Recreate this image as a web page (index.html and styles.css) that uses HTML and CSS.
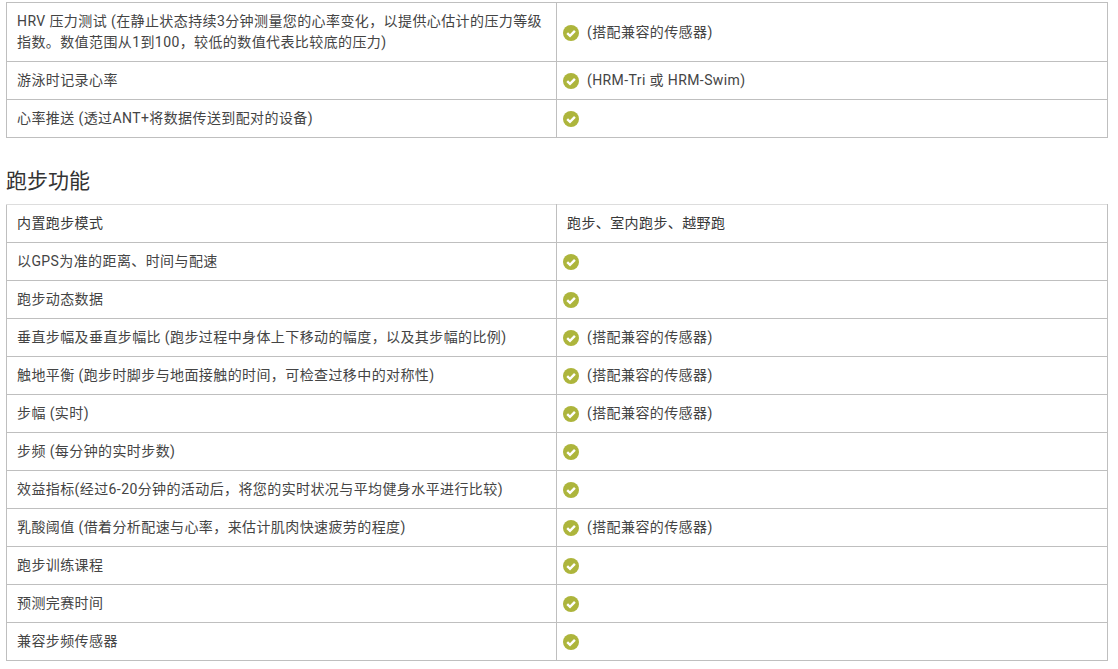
FILE: index.html
```html
<!DOCTYPE html>
<html lang="zh-CN">
<head>
<meta charset="utf-8">
<title>跑步功能</title>
<link rel="stylesheet" href="styles.css">
</head>
<body>
<svg class="defs" width="0" height="0" aria-hidden="true">
  <symbol id="ok" viewBox="0 0 16 16">
    <circle cx="8" cy="8" r="8" fill="#adb53c"/>
    <path d="M4.2 8.2 7 10.9 11.9 5.8" fill="none" stroke="#fff" stroke-width="2.4"/>
  </symbol>
</svg>
<table class="spec first">
  <colgroup><col class="name"><col></colgroup>
  <tr><td>HRV 压力测试 (在静止状态持续3分钟测量您的心率变化，以提供心估计的压力等级指数。数值范围从1到100，较低的数值代表比较底的压力)</td><td><svg class="ok"><use href="#ok"/></svg><span>(搭配兼容的传感器)</span></td></tr>
  <tr><td>游泳时记录心率</td><td><svg class="ok"><use href="#ok"/></svg><span>(HRM-Tri 或 HRM-Swim)</span></td></tr>
  <tr><td>心率推送 (透过ANT+将数据传送到配对的设备)</td><td><svg class="ok"><use href="#ok"/></svg></td></tr>
</table>
<h2 class="title">跑步功能</h2>
<table class="spec second">
  <colgroup><col class="name"><col></colgroup>
  <tr class="head"><td>内置跑步模式</td><td class="plain">跑步、室内跑步、越野跑</td></tr>
  <tr><td>以GPS为准的距离、时间与配速</td><td><svg class="ok"><use href="#ok"/></svg></td></tr>
  <tr><td>跑步动态数据</td><td><svg class="ok"><use href="#ok"/></svg></td></tr>
  <tr><td>垂直步幅及垂直步幅比 (跑步过程中身体上下移动的幅度，以及其步幅的比例)</td><td><svg class="ok"><use href="#ok"/></svg><span>(搭配兼容的传感器)</span></td></tr>
  <tr><td>触地平衡 (跑步时脚步与地面接触的时间，可检查过移中的对称性)</td><td><svg class="ok"><use href="#ok"/></svg><span>(搭配兼容的传感器)</span></td></tr>
  <tr><td>步幅 (实时)</td><td><svg class="ok"><use href="#ok"/></svg><span>(搭配兼容的传感器)</span></td></tr>
  <tr><td>步频 (每分钟的实时步数)</td><td><svg class="ok"><use href="#ok"/></svg></td></tr>
  <tr><td>效益指标(经过6-20分钟的活动后，将您的实时状况与平均健身水平进行比较)</td><td><svg class="ok"><use href="#ok"/></svg></td></tr>
  <tr><td>乳酸阈值 (借着分析配速与心率，来估计肌肉快速疲劳的程度)</td><td><svg class="ok"><use href="#ok"/></svg><span>(搭配兼容的传感器)</span></td></tr>
  <tr><td>跑步训练课程</td><td><svg class="ok"><use href="#ok"/></svg></td></tr>
  <tr><td>预测完赛时间</td><td><svg class="ok"><use href="#ok"/></svg></td></tr>
  <tr><td>兼容步频传感器</td><td><svg class="ok"><use href="#ok"/></svg></td></tr>
</table>
</body>
</html>
```
FILE: styles.css
```css
html, body { margin: 0; padding: 0; background: #fff; }
body {
  padding: 2px 10px 0 6px;
  font-family: Roboto, "Noto Sans CJK SC", sans-serif;
  font-size: 14px;
  line-height: 21px;
  letter-spacing: 0.4px;
  color: #444;
  overflow: hidden;
}
.defs { position: absolute; }
.spec {
  width: 100%;
  table-layout: fixed;
  border-collapse: collapse;
}
.spec .name { width: 550px; }
.spec td {
  border: 1px solid #bfbfbf;
  padding: 8px 10px;
  vertical-align: middle;
}
.spec td + td { padding-left: 6px; }
.spec td.plain { padding-left: 10px; }
.spec tr { height: 38px; }
.second .head { color: #383838; }
.second .head td { border-top-color: #ddd; }
.spec .ok {
  display: inline-block;
  width: 16px;
  height: 16px;
  margin-right: 8px;
  vertical-align: -4px;
}
.title {
  margin: 27px 0 7px;
  font-size: 21px;
  line-height: 32px;
  font-weight: 400;
  letter-spacing: 0;
  color: #333;
}
```
